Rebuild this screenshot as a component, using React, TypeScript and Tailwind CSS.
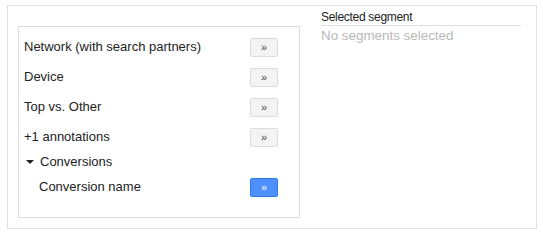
import React from "react";

const Btn = ({ primary = false }: { primary?: boolean }) => (
  <button
    className={
      primary
        ? "w-[28px] h-[19px] rounded-[2px] border border-[#3079ed] bg-[#4d90fe] text-white text-[11px] leading-none flex items-center justify-center"
        : "w-[28px] h-[19px] rounded-[2px] border border-[#dcdcdc] bg-[#f3f3f3] text-[#444] text-[11px] leading-none flex items-center justify-center"
    }
  >
    »
  </button>
);

const Row = ({ label, indent = false, primary = false }: { label: string; indent?: boolean; primary?: boolean }) => (
  <div className="flex items-center justify-between h-[30px] pr-[21px]">
    <span className={indent ? "pl-[20px]" : "pl-[5px]"}>{label}</span>
    <Btn primary={primary} />
  </div>
);

export default function App() {
  return (
    <div className="w-[543px] h-[235px] bg-white" style={{ fontFamily: '"Liberation Sans", Arial, sans-serif' }}>
      <div className="ml-[7px] mt-[5px] w-[530px] h-[224px] border border-[#e0e0e0] flex">
        <div className="mt-[20px] ml-[10px] w-[282px] h-[192px] border border-[#dddddd] pt-[5px] text-[13px] text-[#222]">
          <Row label="Network (with search partners)" />
          <Row label="Device" />
          <Row label="Top vs. Other" />
          <Row label="+1 annotations" />
          <div className="flex items-center h-[20px] pl-[7px]">
            <svg width="8" height="5" viewBox="0 0 8 5" className="mr-[6px]">
              <path d="M0 0 L8 0 L4 4 Z" fill="#222" />
            </svg>
            <span>Conversions</span>
          </div>
          <Row label="Conversion name" indent primary />
        </div>
        <div className="ml-[21px] mt-[4px] w-[200px]">
          <div className="text-[12px] text-[#222] leading-[14px] border-b border-[#e0e0e0] pb-[1px] tracking-[-0.3px]">Selected segment</div>
          <div className="text-[13.4px] text-[#b8b8b8] leading-[16px] mt-[2px]">No segments selected</div>
        </div>
      </div>
    </div>
  );
}
